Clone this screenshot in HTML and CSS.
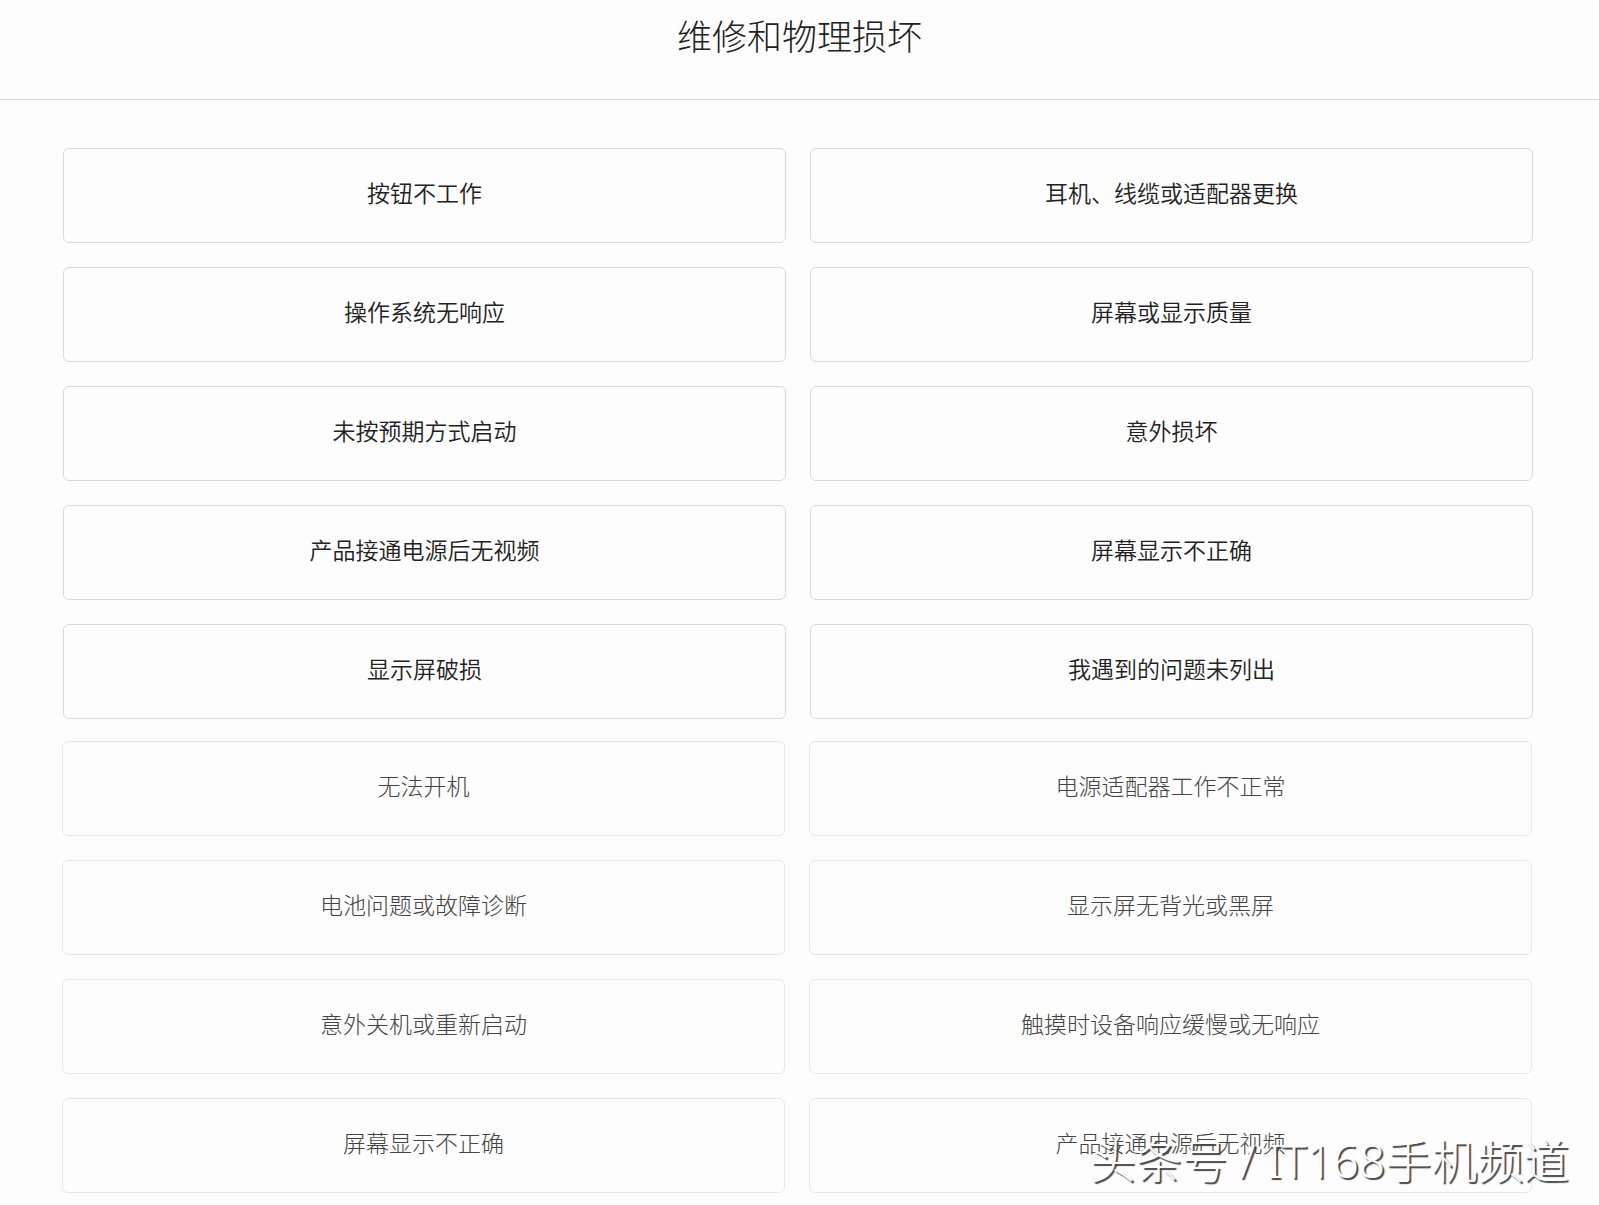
FILE: index.html
```
<!DOCTYPE html>
<html lang="zh-CN">
<head>
    <meta charset="UTF-8">
    <meta name="viewport" content="width=device-width, initial-scale=1.0">
    <title>维修和物理损坏</title>
    <link rel="stylesheet" href="styles.css">
</head>
<body>
    <!-- 标题 -->
    <header class="header">
        <h1>维修和物理损坏</h1>
    </header>

    <main class="content">
        <!-- 问题列表 -->
        <ul class="topics">
            <li><button type="button">按钮不工作</button></li>
            <li><button type="button">耳机、线缆或适配器更换</button></li>
            <li><button type="button">操作系统无响应</button></li>
            <li><button type="button">屏幕或显示质量</button></li>
            <li><button type="button">未按预期方式启动</button></li>
            <li><button type="button">意外损坏</button></li>
            <li><button type="button">产品接通电源后无视频</button></li>
            <li><button type="button">屏幕显示不正确</button></li>
            <li><button type="button">显示屏破损</button></li>
            <li><button type="button">我遇到的问题未列出</button></li>
        </ul>
        <!-- 浅色部分 -->
        <ul class="topics light">
            <li><button type="button">无法开机</button></li>
            <li><button type="button">电源适配器工作不正常</button></li>
            <li><button type="button">电池问题或故障诊断</button></li>
            <li><button type="button">显示屏无背光或黑屏</button></li>
            <li><button type="button">意外关机或重新启动</button></li>
            <li><button type="button">触摸时设备响应缓慢或无响应</button></li>
            <li><button type="button">屏幕显示不正确</button></li>
            <li><button type="button">产品接通电源后无视频</button></li>
        </ul>
    </main>

    <!-- 水印 -->
    <div class="watermark">头条号 / IT168手机频道</div>
</body>
</html>
```

FILE: styles.css
```
*{
    margin: 0;
    padding: 0;
    box-sizing: border-box;
}
li{
    list-style: none;
}
body{
    position: relative;
    background: #fdfdfd;
    color: #222;
    font-family: "Noto Sans CJK SC", sans-serif;
}
.header{
    padding: 9px 0 38px;
    border-bottom: 1px solid #d6d6d6;
}
.header h1{
    font-size: 35px;
    font-weight: 300;
    line-height: 52px;
    text-align: center;
}
.content{
    padding: 48px 66px 12px 63px;
}
.topics{
    display: grid;
    grid-template-columns: 1fr 1fr;
    gap: 24px;
}
.topics button{
    display: block;
    width: 100%;
    height: 95px;
    padding-bottom: 7px;
    border: 1px solid #d9d9d9;
    border-radius: 6px;
    background: #fdfdfd;
    color: #222;
    font-family: inherit;
    font-size: 23px;
    font-weight: 350;
    cursor: pointer;
}
/* 浅色列表 */
.topics.light{
    margin: 22px 1px 0 -1px;
}
.topics.light button{
    border-color: #e8e8e8;
    color: #444;
    font-weight: 300;
}
/* 水印浮在右下角 */
.watermark{
    position: absolute;
    right: 30px;
    bottom: 12px;
    color: #fdfdfd;
    font-family: "Noto Sans", "Noto Sans CJK SC", sans-serif;
    font-size: 46px;
    font-weight: 300;
    line-height: 66px;
    white-space: nowrap;
    text-shadow: 2px 2px 1px #444;
    pointer-events: none;
}
```
